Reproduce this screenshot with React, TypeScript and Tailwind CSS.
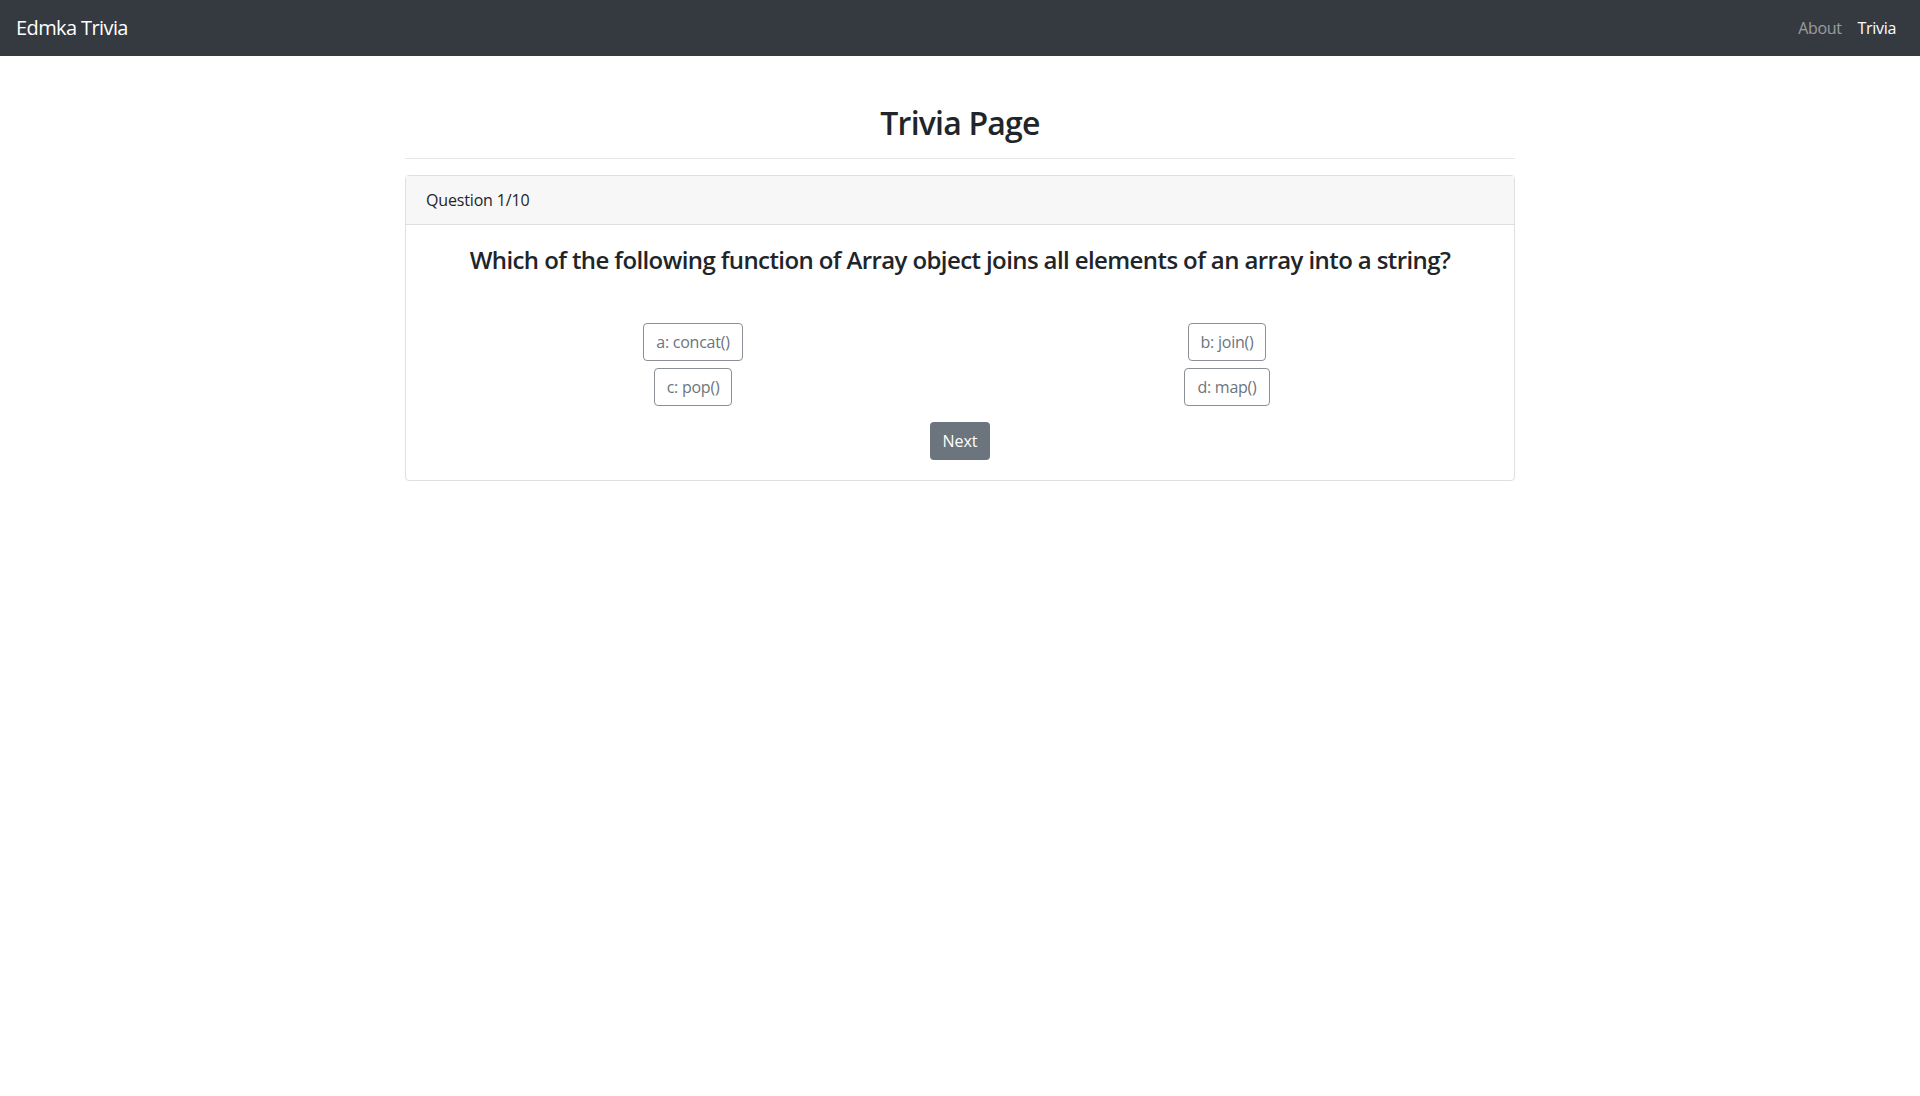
import React from "react";

const answers = ["a: concat()", "b: join()", "c: pop()", "d: map()"];

const App: React.FC = () => (
  <div className="min-h-screen bg-white text-[#212529] font-['Open_Sans',sans-serif]">
    <nav className="h-14 bg-[#343a40] flex items-center justify-between px-4">
      <span className="text-[20px] leading-[30px] text-white tracking-[-0.03em]">Edmka Trivia</span>
      <div className="flex text-[16px] leading-6 tracking-[-0.02em]">
        <span className="px-2 text-white/50">About</span>
        <span className="px-2 text-white">Trivia</span>
      </div>
    </nav>

    <div className="w-[1110px] mx-auto">
      <h2 className="mt-12 text-[32px] leading-[38px] font-semibold text-center tracking-[-0.025em]">Trivia Page</h2>
      <hr className="mt-4 mb-4 border-t border-[#e6e6e6]" />

      <div className="border border-[#dfdfdf] rounded">
        <div className="px-5 py-3 bg-[#f7f7f7] border-b border-[#dfdfdf] text-[16px] leading-6 tracking-[-0.01em]">
          Question 1/10
        </div>
        <div className="p-5 text-center">
          <h4 className="text-[24px] leading-[29px] font-semibold mb-2 tracking-[-0.025em]">
            Which of the following function of Array object joins all elements of an array into a string?
          </h4>
          <div className="grid grid-cols-2 gap-y-[7px] mt-[49px]">
            {answers.map((a) => (
              <div key={a} className="flex justify-center">
                <button className="h-[38px] px-3 border border-[#8a9096] rounded text-[16px] leading-6 text-[#6c757d] bg-white tracking-[-0.015em]">
                  {a}
                </button>
              </div>
            ))}
          </div>
          <button className="mt-4 h-[38px] px-3 rounded bg-[#6c757d] text-white text-[16px] leading-6">
            Next
          </button>
        </div>
      </div>
    </div>
  </div>
);

export default App;
